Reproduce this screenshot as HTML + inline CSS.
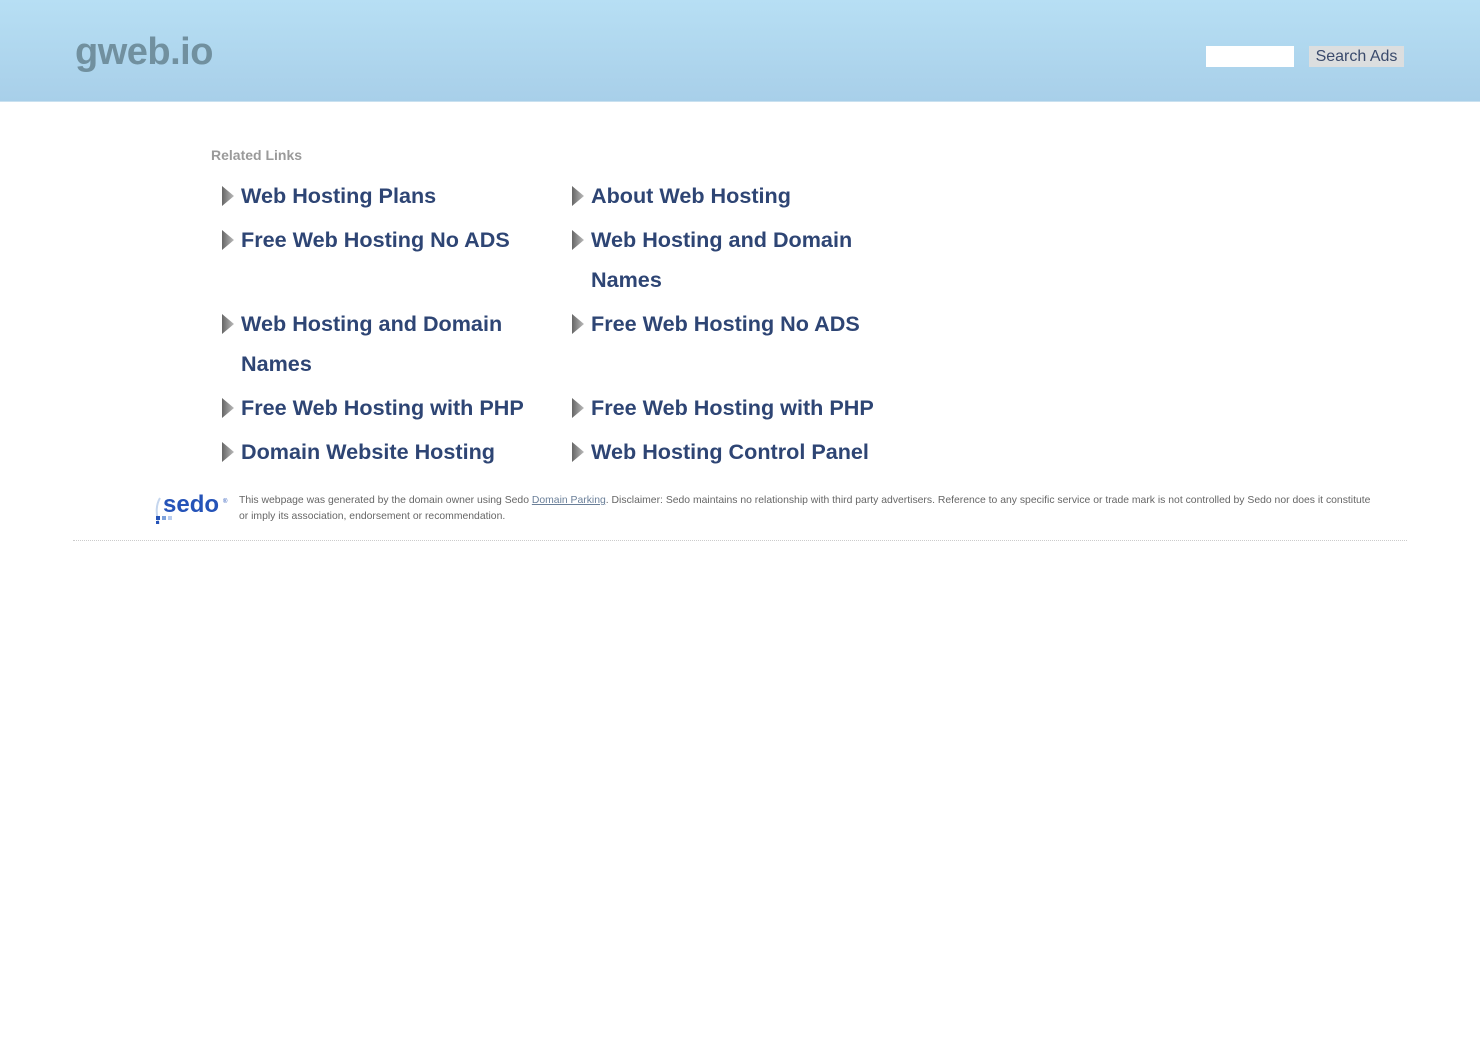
<!DOCTYPE html>
<html><head><meta charset="utf-8"><style>
body{margin:0;background:#fff;font-family:"Liberation Sans",Arial,sans-serif;}
.hd{height:101px;background:linear-gradient(#b7dff4,#a8cfe9);position:relative;border-bottom:1px solid #c9e1f0;}
.logo{position:absolute;left:75px;top:31px;font-size:38px;font-weight:bold;color:#71909f;letter-spacing:-0.5px;}
.inp{position:absolute;left:1206px;top:46px;width:88px;height:21px;background:#fff;}
.btn{position:absolute;left:1309px;top:46px;width:95px;height:21px;background:#dcdedf;color:#3a4a6c;font-size:16px;line-height:21px;text-align:center;}
.rl{position:absolute;left:211px;top:147px;font-size:14px;font-weight:bold;color:#9a9a9a;}
table{position:absolute;top:176px;left:221px;border-collapse:collapse;}
td{vertical-align:top;width:350px;padding:0 0 4px 0;}
.it{position:relative;padding-left:20px;font-size:21.6px;font-weight:bold;color:#2e4574;line-height:40px;width:300px;}
.it svg{position:absolute;left:0;top:10px;}
.ft{position:absolute;left:239px;top:493px;width:1140px;font-size:10.4px;line-height:16px;color:#666;}
.ft a{color:#6a7f99;text-decoration:underline;}
.line{position:absolute;left:73px;top:540px;width:1334px;border-top:1px dotted #ccc;}
.sedo{position:absolute;left:154px;top:488px;}
</style></head><body>
<div class="hd"><div class="logo">gweb.io</div><div class="inp"></div><div class="btn">Search Ads</div></div>
<div class="rl">Related Links</div>
<svg width="0" height="0" style="position:absolute"><defs><linearGradient id="g" x1="0" x2="1"><stop offset="0" stop-color="#666"/><stop offset="1" stop-color="#bbb"/></linearGradient></defs></svg>
<table>
<tr><td><div class="it"><svg width="14" height="20"><path d="M1 0L13 10L1 20Z" fill="url(#g)"/></svg>Web Hosting Plans</div></td><td><div class="it"><svg width="14" height="20"><path d="M1 0L13 10L1 20Z" fill="url(#g)"/></svg>About Web Hosting</div></td></tr>
<tr><td><div class="it"><svg width="14" height="20"><path d="M1 0L13 10L1 20Z" fill="url(#g)"/></svg>Free Web Hosting No ADS</div></td><td><div class="it"><svg width="14" height="20"><path d="M1 0L13 10L1 20Z" fill="url(#g)"/></svg>Web Hosting and Domain Names</div></td></tr>
<tr><td><div class="it"><svg width="14" height="20"><path d="M1 0L13 10L1 20Z" fill="url(#g)"/></svg>Web Hosting and Domain Names</div></td><td><div class="it"><svg width="14" height="20"><path d="M1 0L13 10L1 20Z" fill="url(#g)"/></svg>Free Web Hosting No ADS</div></td></tr>
<tr><td><div class="it"><svg width="14" height="20"><path d="M1 0L13 10L1 20Z" fill="url(#g)"/></svg>Free Web Hosting with PHP</div></td><td><div class="it"><svg width="14" height="20"><path d="M1 0L13 10L1 20Z" fill="url(#g)"/></svg>Free Web Hosting with PHP</div></td></tr>
<tr><td><div class="it"><svg width="14" height="20"><path d="M1 0L13 10L1 20Z" fill="url(#g)"/></svg>Domain Website Hosting</div></td><td><div class="it"><svg width="14" height="20"><path d="M1 0L13 10L1 20Z" fill="url(#g)"/></svg>Web Hosting Control Panel</div></td></tr>
</table>
<svg class="sedo" width="80" height="40"><path d="M6 10Q0 20 5 36" stroke="#c5d6ee" stroke-width="2" fill="none"/><text x="9" y="24" font-family="Liberation Sans,sans-serif" font-weight="bold" font-size="24" fill="#2553b8">sedo</text><text x="69" y="15" font-size="6" fill="#2553b8" font-family="Liberation Sans,sans-serif">®</text><rect x="2" y="28" width="4" height="4" fill="#2553b8"/><rect x="8" y="28" width="4" height="4" fill="#7ea3dc"/><rect x="14" y="28" width="4" height="4" fill="#b9cdef"/><rect x="2" y="33" width="3" height="3" fill="#2553b8"/></svg>
<div class="ft">This webpage was generated by the domain owner using Sedo <a>Domain Parking</a>. Disclaimer: Sedo maintains no relationship with third party advertisers. Reference to any specific service or trade mark is not controlled by Sedo nor does it constitute or imply its association, endorsement or recommendation.</div>
<div class="line"></div>
</body></html>
